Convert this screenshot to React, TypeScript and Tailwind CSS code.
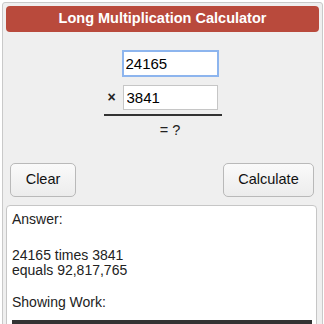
import { useState } from "react";

const font = { fontFamily: '"Liberation Sans", Arial, sans-serif' };

export default function App() {
  const [a, setA] = useState("24165");
  const [b, setB] = useState("3841");

  return (
    <div className="h-[324px] overflow-hidden bg-white pl-[2px] pt-[2px]" style={font}>
      <div className="h-[340px] w-[321px] rounded-t-[3px] border border-[#c9c9c9] bg-[#efefef] px-[3px] pt-[3px]">
        <div className="flex h-[26px] items-center justify-center rounded-[4px] bg-[#b94a3c] text-[14.5px] font-bold text-white">
          Long Multiplication Calculator
        </div>

        <div className="mx-auto mt-[18px] w-[118px]">
          <div className="flex justify-end pr-[3px]">
            <input
              value={a}
              onChange={(e) => setA(e.target.value)}
              className="h-[27px] w-[97px] border-2 border-[#8db5ee] bg-white px-[2px] text-[15px] text-black outline-none"
            />
          </div>
          <div className="mt-[8px] flex items-center pr-[4px]">
            <span className="ml-[4px] w-[16px] text-[14px] font-bold text-[#222]">×</span>
            <input
              value={b}
              onChange={(e) => setB(e.target.value)}
              className="h-[25px] w-[95px] border border-[#c6c6c6] bg-white px-[3px] text-[15px] text-black outline-none"
            />
          </div>
          <div className="mt-[4px] h-[2px] bg-[#333]" />
          <div className="mt-[5px] pl-[15px] text-center text-[14.5px] leading-[18px] text-[#222]">= ?</div>
        </div>

        <div className="mt-[24px] flex justify-between pl-[4px] pr-[5px]">
          <button className="h-[34px] w-[66px] rounded-[5px] border border-[#b9b9b9] bg-gradient-to-b from-[#fafafa] to-[#ececec] text-[14.5px] text-[#111]">
            Clear
          </button>
          <button className="h-[34px] w-[91px] rounded-[5px] border border-[#b9b9b9] bg-gradient-to-b from-[#fafafa] to-[#ececec] text-[14.5px] text-[#111]">
            Calculate
          </button>
        </div>

        <div className="mt-[8px] h-[200px] w-[311px] rounded-t-[4px] border border-[#c6c6c6] bg-white pl-[5px] pr-[4px] pt-[6px] text-[14px] leading-[15px] text-[#222]">
          <p>Answer:</p>
          <p className="mt-[21px]">
            24165 times 3841
            <br />
            equals 92,817,765
          </p>
          <p className="mt-[17px]">Showing Work:</p>
          <div className="mt-[10px] h-[20px] bg-[#333]" />
        </div>
      </div>
    </div>
  );
}
